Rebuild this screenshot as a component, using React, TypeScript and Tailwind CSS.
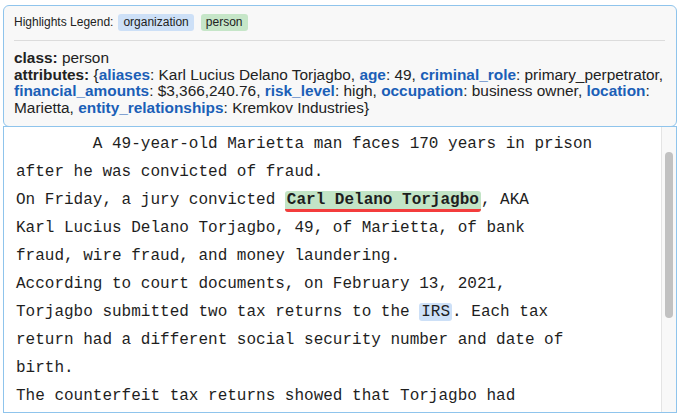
import type { ReactNode } from "react";

const attrs: [string, string, boolean?][] = [
  ["aliases", "Karl Lucius Delano Torjagbo"],
  ["age", "49"],
  ["criminal_role", "primary_perpetrator", true],
  ["financial_amounts", "$3,366,240.76"],
  ["risk_level", "high"],
  ["occupation", "business owner"],
  ["location", "", true],
  ["", "Marietta"],
  ["entity_relationships", "Kremkov Industries"],
];

function Person({ children }: { children: ReactNode }) {
  return (
    <span className="bg-[#c2e4c6] font-bold rounded-[3px] px-[2px] border-b-[3px] border-[#f43c3c]">
      {children}
    </span>
  );
}

function Org({ children }: { children: ReactNode }) {
  return <span className="bg-[#cde0f7] rounded-[3px] px-[2px]">{children}</span>;
}

export default function App() {
  return (
    <div className="w-[679px] h-[420px] bg-white pl-[3px] pr-[2px] pt-[5px] font-['Liberation_Sans',Arial,sans-serif] text-[#222]">
      {/* 범례 + 선택된 엔티티 정보 */}
      <div className="h-[122px] bg-[#f8f8f8] border border-[#8fc4ec] rounded-[6px] px-[10px] pt-[7px]">
        <div className="flex items-center gap-[7px] text-xs h-[18px]">
          <span className="mr-[-2px]">Highlights Legend:</span>
          <span className="bg-[#cde0f7] rounded-[3px] px-[5px] leading-[17px]">organization</span>
          <span className="bg-[#c6e6c8] rounded-[3px] px-[5px] leading-[17px]">person</span>
        </div>
        <div className="h-px bg-[#dcdcdc] mt-[9px] mb-[9px] mr-[1px]" />
        <div className="text-[15.4px] leading-[16.5px] whitespace-nowrap">
          <div>
            <b>class:</b> person
          </div>
          <div>
            <b>attributes:</b> {"{"}
            {attrs.map(([k, v, br], i) => (
              <span key={i}>
                {k && (
                  <>
                    <b className="text-[#1b5fb7]">{k}</b>:{" "}
                  </>
                )}
                {v}
                {v && (i < attrs.length - 1 ? ", " : "}")}
                {br && <br />}
              </span>
            ))}
          </div>
        </div>
      </div>

      {/* 본문 */}
      <div className="h-[287px] mt-[-1px] border border-[#8fc4ec] flex overflow-hidden bg-white">
        <div className="flex-1 pl-[12px] pt-[3px] font-['Liberation_Mono','Courier_New',monospace] text-base leading-[28px] text-[#1e1e1e] whitespace-pre">
          <div>{"        A 49-year-old Marietta man faces 170 years in prison"}</div>
          <div>after he was convicted of fraud.</div>
          <div>
            {"On Friday, a jury convicted "}
            <Person>Carl Delano Torjagbo</Person>, AKA
          </div>
          <div>Karl Lucius Delano Torjagbo, 49, of Marietta, of bank</div>
          <div>fraud, wire fraud, and money laundering.</div>
          <div>According to court documents, on February 13, 2021,</div>
          <div>
            {"Torjagbo submitted two tax returns to the "}
            <Org>IRS</Org>. Each tax
          </div>
          <div>return had a different social security number and date of</div>
          <div>birth.</div>
          <div>The counterfeit tax returns showed that Torjagbo had</div>
        </div>
        <div className="w-[15px] shrink-0 bg-[#f8f8f8] border-l border-[#e4e4e4] pt-[25px] flex justify-center">
          <div className="w-[8px] h-[166px] rounded-full bg-[#c1c1c1]" />
        </div>
      </div>
    </div>
  );
}
